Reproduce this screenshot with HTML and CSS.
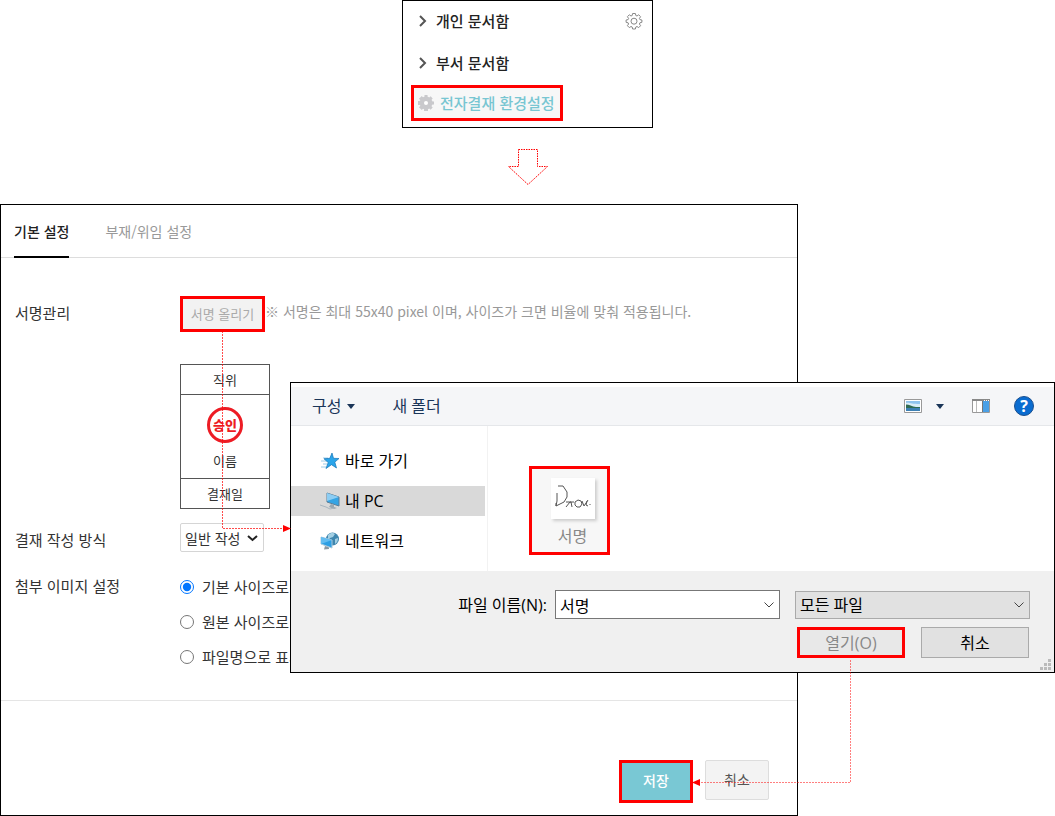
FILE: index.html
```html
<!DOCTYPE html>
<html lang="ko">
<head>
  <meta charset="UTF-8" />
  <meta name="viewport" content="width=device-width, initial-scale=1" />
  <title>전자결재 환경설정</title>
  <link rel="stylesheet" href="styles.css">
</head>
<body>

<!-- Side menu -->
<nav class="menu">
  <div class="menu-row">
    <a href="#" class="menu-link">
      <svg class="menu-arrow" width="8" height="12" viewBox="0 0 8 12"><path d="M1 1l5 5-5 5" fill="none" stroke="#555" stroke-width="2"/></svg>
      개인 문서함
    </a>
    <button class="gear-button" aria-label="문서함 설정">
      <svg width="18" height="18" viewBox="0 0 18 18" fill="none" stroke="#888">
        <path d="M7.6 1.5h2.8l.4 2 1.2.5 1.7-1.2 1.9 1.9L14.4 6.4l.5 1.2 2 .4v2.3l-2 .5-.5 1.2 1.2 1.7-1.9 1.9-1.7-1.1-1.2.5-.4 2H7.6l-.4-2-1.2-.5-1.7 1.1-1.9-1.9L3.600 12l-.5-1.2-2-.5V8l2-.4.5-1.2-1.2-1.7 1.9-1.9L6 4l1.2-.5z"/>
        <circle cx="9" cy="9.2" r="3"/>
      </svg>
    </button>
  </div>
  <div class="menu-row">
    <a href="#" class="menu-link">
      <svg class="menu-arrow" width="8" height="12" viewBox="0 0 8 12"><path d="M1 1l5 5-5 5" fill="none" stroke="#555" stroke-width="2"/></svg>
      부서 문서함
    </a>
  </div>
  <a href="#" class="menu-current marked">
    <svg width="16" height="16" viewBox="0 0 16 16">
      <g fill="#c9c9cc">
        <circle cx="8" cy="8" r="6.5"/>
        <path d="M6.5 0h3l.5 16H6z"/>
        <path d="M6.5 0h3l.5 16H6z" transform="rotate(45 8 8)"/>
        <path d="M6.5 0h3l.5 16H6z" transform="rotate(90 8 8)"/>
        <path d="M6.5 0h3l.5 16H6z" transform="rotate(135 8 8)"/>
      </g>
      <circle cx="8" cy="8" r="2" fill="#fff"/>
    </svg>
    전자결재 환경설정
  </a>
</nav>

<svg class="down-arrow" width="40" height="36" viewBox="0 0 40 36">
  <path d="M10.5 .5h19v17h10L20 35.5.5 17.5h10z" fill="none" stroke="#f00" stroke-dasharray="1.5 1"/>
</svg>

<div class="workflow">

  <!-- Settings page -->
  <main class="settings">
    <div class="tabs">
      <a href="#" class="tab active">기본 설정</a>
      <a href="#" class="tab">부재/위임 설정</a>
    </div>

    <form class="form">
      <div class="form-row">
        <div class="form-label">서명관리</div>
        <div class="form-field">
          <div class="upload-row">
            <button type="button" class="upload-button marked">서명 올리기</button>
            <span class="hint">※ 서명은 최대 55x40 pixel 이며, 사이즈가 크면 비율에 맞춰 적용됩니다.</span>
          </div>
          <table class="stamp">
            <tr><td>직위</td></tr>
            <tr>
              <td class="stamp-body">
                <span class="seal">승인</span>
                이름
              </td>
            </tr>
            <tr><td>결재일</td></tr>
          </table>
        </div>
      </div>

      <div class="form-row">
        <label class="form-label" for="writeMode">결재 작성 방식</label>
        <div class="form-field">
          <div class="select-box write-mode">
            <select id="writeMode"><option>일반 작성</option></select>
            <svg width="11" height="7" viewBox="0 0 11 7"><path d="M1 1l4.5 4L10 1" fill="none" stroke="#222" stroke-width="2"/></svg>
          </div>
        </div>
      </div>

      <div class="form-row">
        <div class="form-label">첨부 이미지 설정</div>
        <div class="form-field">
          <label class="radio"><input type="radio" name="imageSize" checked>기본 사이즈로</label>
          <label class="radio"><input type="radio" name="imageSize">원본 사이즈로</label>
          <label class="radio"><input type="radio" name="imageSize">파일명으로 표시</label>
        </div>
      </div>
    </form>

    <div class="actions">
      <button class="save-button marked">저장</button>
      <button class="cancel-button">취소</button>
    </div>
  </main>

  <!-- File open dialog -->
  <section class="dialog">
    <div class="toolbar">
      <button class="tool">구성
        <svg width="8" height="5" viewBox="0 0 8 5"><path d="M0 0h8L4 5z" fill="#1a3558"/></svg>
      </button>
      <button class="tool">새 폴더</button>
      <div class="view-tools">
        <button class="tool view-tool" aria-label="보기 변경">
          <svg width="18" height="14" viewBox="0 0 18 14">
            <path d="M.5.5h17v13H.5z" fill="#fff" stroke="#999"/>
            <path d="M2 2h14v10H2z" fill="#8fc4ee"/>
            <path d="M2 4c3-1 5 1 14 1v4H2z" fill="#d8ecf8"/>
            <path d="M2 5.500c3 0 6 2 10 2.500h4v1H2z" fill="#2f6b52"/>
            <path d="M2 9h14v3H2z" fill="#3c80b4"/>
          </svg>
          <svg width="8" height="5" viewBox="0 0 8 5"><path d="M0 0h8L4 5z" fill="#1a3558"/></svg>
        </button>
        <button class="tool" aria-label="미리 보기 창">
          <svg width="18" height="14" viewBox="0 0 18 14">
            <path d="M.5.5h17v13H.5z" fill="#fff" stroke="#999"/>
            <path d="M0 0h18v2H0z" fill="#888"/>
            <path d="M12 1h1v1h-1zM14 1h1v1h-1zM16 1h1v1h-1z" fill="#fff"/>
            <path d="M4.500 2v11" stroke="#bbb"/>
            <path d="M11 2h6v11h-6z" fill="#4aa0e6"/>
            <path d="M10.500 2v11" stroke="#777"/>
          </svg>
        </button>
        <button class="help-button" aria-label="도움말">?</button>
      </div>
    </div>

    <div class="dialog-body">
      <div class="places">
        <a href="#" class="place">
          <svg width="20" height="18" viewBox="0 0 20 18">
            <path d="M3 6h5M1 9h6M3 12h4M1 15h5" stroke="#9ccbe8"/>
            <path d="M12 1l1.500 5.300 5.500.2-4.200 3.600 1.700 5.900-5-3.300L6 16.500l2.200-6L4 6.800l5.800-.5z" fill="#2aa5ea" stroke="#1474b8" stroke-width=".7"/>
          </svg>
          바로 가기
        </a>
        <a href="#" class="place selected">
          <svg width="20" height="18" viewBox="0 0 20 18">
            <path d="M7 1l12 4v9L7 10z" fill="#35a4e4" stroke="#5c7f99"/>
            <path d="M7 1l12 4-12 4z" fill="#8ccdf3"/>
            <path d="M11 12l3 1v2l3 1-3 1-5-2z" fill="#9aa7b0"/>
            <path d="M0 13l6 2 4 2 4-1" fill="none" stroke="#aab6bf"/>
          </svg>
          내 PC
        </a>
        <a href="#" class="place">
          <svg width="20" height="18" viewBox="0 0 20 18">
            <circle cx="12.500" cy="7" r="6.500" fill="#3f86ae"/>
            <path d="M8 3c3-3 6-2 7-1l-2 3-3 1-2 3zM15 7l3-1c0 3-1 5-3 6z" fill="#a3cfe3"/>
            <path d="M1 5l11 3v8L1 12z" fill="#2d9fe4" stroke="#a9c8dc"/>
            <path d="M1 5l11 3-11 4z" fill="#62bcf0"/>
            <path d="M5 14l4 1.500v1.500l-5 .5z" fill="#8a98a2"/>
          </svg>
          네트워크
        </a>
      </div>
      <div class="files">
        <button class="file marked">
          <svg class="thumb" width="44" height="41" viewBox="0 0 44 41" fill="none" stroke="#555">
            <path d="M7 8h5l4 6v5l-3 5-8 4v-3M6 15v8l-1 5M15 24h8M15 29l4-5h1l1 5M27 22l-3 2v3l2 2h3l2-3-1-3zM31 23l2 5 4-6M36 23l-1 4 2 1M39 26v1"/>
          </svg>
          서명
        </button>
      </div>
    </div>

    <div class="dialog-footer">
      <div class="file-row">
        <label for="fileName">파일 이름(N):</label>
        <div class="select-box file-name">
          <input type="text" id="fileName" value="서명">
          <svg width="10" height="6" viewBox="0 0 10 6"><path d="M.5.5L5 5 9.500.5" fill="none" stroke="#444"/></svg>
        </div>
        <div class="select-box file-type">
          <select aria-label="파일 형식"><option>모든 파일</option></select>
          <svg width="10" height="6" viewBox="0 0 10 6"><path d="M.5.5L5 5 9.500.5" fill="none" stroke="#444"/></svg>
        </div>
      </div>
      <div class="dialog-buttons">
        <button class="dialog-button open-button marked">열기(O)</button>
        <button class="dialog-button">취소</button>
      </div>
      <svg class="grip" width="12" height="12" viewBox="0 0 12 12" fill="#bbb">
        <path d="M9 0h3v3H9zM5 4h3v3H5zM9 4h3v3H9zM1 8h3v3H1zM5 8h3v3H5zM9 8h3v3H9z"/>
      </svg>
    </div>
  </section>

  <!-- Connectors between the steps -->
  <svg class="connector to-dialog" width="69" height="202" viewBox="0 0 69 202">
    <path d="M.5 0v197.500H62" fill="none" stroke="#f00" stroke-opacity="0.700" stroke-dasharray="2 1"/>
    <path d="M61 194l8 3.500-8 3.500z" fill="#f00"/>
  </svg>
  <svg class="connector to-save" width="159" height="127" viewBox="0 0 159 127">
    <path d="M158.500 0v122.500H8" fill="none" stroke="#f00" stroke-opacity="0.500" stroke-dasharray="2 1"/>
    <path d="M8 119l-8 3.500 8 3.500z" fill="#f00"/>
  </svg>
</div>

</body>
</html>
```

FILE: styles.css
```css
* {
  box-sizing: border-box;
}

body {
  margin: 0;
  background: #fff;
  color: #333;
  font-family: "Noto Sans CJK KR", sans-serif;
  font-size: 15px;
  line-height: 20px;
}

a {
  color: inherit;
  text-decoration: none;
}

button,
input,
select {
  font: inherit;
  color: inherit;
  margin: 0;
}

button {
  padding: 0;
  border: none;
  background: none;
  cursor: pointer;
}

svg {
  display: block;
  flex: none;
}

/* Red frame around the control of each step */
.marked {
  outline: 3px solid #f00;
  outline-offset: -3px;
}

/* Side menu */
.menu {
  display: flex;
  flex-direction: column;
  gap: 2px;
  width: 251px;
  margin: 0 auto;
  padding: 0 9px 6px 8px;
  border: 1px solid #000;
}

.menu-row {
  display: flex;
  justify-content: space-between;
  align-items: center;
  height: 40px;
  padding-left: 8px;
}

.menu-link {
  display: flex;
  align-items: center;
  gap: 9px;
  color: #222;
  font-weight: 500;
}

.menu-current {
  display: flex;
  align-items: center;
  align-self: flex-start;
  gap: 6px;
  height: 36px;
  padding: 0 8px 0 7px;
  background: #f7f7f7;
  color: #78c6d2;
  font-weight: 500;
}

.down-arrow {
  margin: 21px auto 19px;
}

.workflow {
  position: relative;
}

/* Settings page */
.settings {
  width: calc(100% - 257px);
  border: 1px solid #000;
}

.tabs {
  display: flex;
  gap: 36px;
  padding: 0 13px;
  border-bottom: 1px solid #ddd;
  font-size: 14px;
}

.tab {
  height: 53px;
  margin-bottom: -1px;
  padding-top: 16px;
  color: #999;
}

.tab.active {
  border-bottom: 2px solid #000;
  color: #222;
  font-weight: 500;
}

.form {
  display: flex;
  flex-direction: column;
  gap: 14px;
  padding: 38px 14px 26px;
  border-bottom: 1px solid #e5e5e5;
}

.form-row {
  display: flex;
}

.form-label {
  flex: none;
  width: 165px;
  padding-top: 7px;
}

.form-field {
  flex: 1;
}

.upload-row {
  display: flex;
  margin-bottom: 32px;
}

.upload-button {
  flex: none;
  width: 85px;
  height: 36px;
  background: #f2f2f2;
  color: #aaa;
  font-size: 13px;
}

.hint {
  padding-top: 5px;
  color: #999;
  font-size: 14px;
}

.stamp {
  width: 90px;
  border-collapse: collapse;
  font-size: 13px;
  text-align: center;
}

.stamp td {
  height: 30px;
  padding: 0;
  border: 1px solid #555;
}

.stamp .stamp-body {
  height: 84px;
}

.seal {
  display: block;
  width: 36px;
  height: 36px;
  margin: 4px auto 8px;
  border: 3px solid #ed1c24;
  border-radius: 50%;
  color: #ed1c24;
  font-size: 13px;
  font-weight: 900;
  line-height: 30px;
}

.select-box {
  position: relative;
}

.select-box select,
.select-box input {
  width: 100%;
  height: 100%;
  padding: 0 4px;
  border: 1px solid #aaa;
  border-radius: 0;
  appearance: none;
  background: #e1e1e1;
}

.select-box svg {
  position: absolute;
  top: 50%;
  right: 6px;
  margin-top: -3px;
  pointer-events: none;
}

.write-mode {
  width: 84px;
  height: 29px;
  margin-bottom: 3px;
  font-size: 14px;
}

.write-mode select {
  border-color: #d5d5d5;
  border-radius: 2px;
  background: #fff;
}

.radio {
  display: flex;
  align-items: center;
  gap: 8px;
  height: 35px;
}

.radio input {
  width: 14px;
  height: 14px;
}

.actions {
  display: flex;
  justify-content: flex-end;
  gap: 12px;
  padding: 59px 28px 12px;
}

.save-button {
  width: 74px;
  height: 43px;
  padding-bottom: 4px;
  background: #79c8d4;
  color: #fff;
  font-size: 14px;
  font-weight: 500;
}

.cancel-button {
  width: 64px;
  height: 40px;
  padding-bottom: 2px;
  border: 1px solid #ddd;
  border-radius: 2px;
  background: #f3f3f3;
  color: #555;
  font-size: 14px;
}

/* File open dialog */
.dialog {
  position: absolute;
  top: 178px;
  left: 290px;
  right: 0;
  padding-top: 4px;
  border: 1px solid #000;
  background: #fff;
  color: #000;
  font-family: "Open Sans", "Noto Sans CJK KR", sans-serif;
  font-size: 16px;
}

.toolbar {
  display: flex;
  align-items: center;
  gap: 37px;
  height: 39px;
  padding: 0 20px 0 21px;
  border-bottom: 1px solid #e5e7ea;
  background: #f5f6f8;
}

.tool {
  display: flex;
  align-items: center;
  gap: 6px;
  color: #1a3558;
}

.view-tools {
  display: flex;
  align-items: center;
  gap: 24px;
  margin-left: auto;
}

.view-tool {
  gap: 14px;
  margin-right: 4px;
}

.help-button {
  width: 20px;
  height: 20px;
  border: 1px solid #1a4f8f;
  border-radius: 50%;
  background: #0a6cd0;
  color: #fff;
  font-weight: 700;
  line-height: 18px;
}

.dialog-body {
  display: flex;
  height: 145px;
}

.places {
  display: flex;
  flex-direction: column;
  gap: 10px;
  width: 197px;
  padding: 20px 2px 0 0;
  border-right: 1px solid #f2f2f2;
}

.place {
  display: flex;
  align-items: center;
  gap: 5px;
  height: 30px;
  padding-left: 29px;
}

.place.selected {
  background: #d9d9d9;
}

.files {
  padding: 40px 41px;
}

.file {
  display: flex;
  flex-direction: column;
  align-items: center;
  gap: 7px;
  width: 81px;
  height: 89px;
  padding-top: 12px;
  padding-left: 6px;
  background: #f7f7f7;
  color: #888;
}

.thumb {
  background: #fff;
  box-shadow: 2px 2px 3px #ccc;
}

.dialog-footer {
  position: relative;
  padding: 19px 24px 14px;
  background: #f0f0f0;
}

.file-row {
  display: flex;
  justify-content: flex-end;
  align-items: center;
}

.file-name {
  width: 225px;
  height: 29px;
  margin: 0 15px 0 8px;
}

.file-name input {
  border-color: #777;
  background: #fff;
}

.file-type {
  width: 235px;
  height: 28px;
}

.dialog-buttons {
  display: flex;
  justify-content: flex-end;
  gap: 16px;
  margin: 8px 1px 0 0;
}

.dialog-button {
  width: 108px;
  height: 31px;
  border: 1px solid #aaa;
  background: #e1e1e1;
}

.open-button {
  border: none;
  background: #e8e8e8;
  color: #888;
}

.grip {
  position: absolute;
  right: 3px;
  bottom: 1px;
}

/* Connectors */
.connector {
  position: absolute;
  pointer-events: none;
}

.to-dialog {
  top: 127px;
  left: 222px;
}

.to-save {
  top: 456px;
  right: 204px;
}
```
